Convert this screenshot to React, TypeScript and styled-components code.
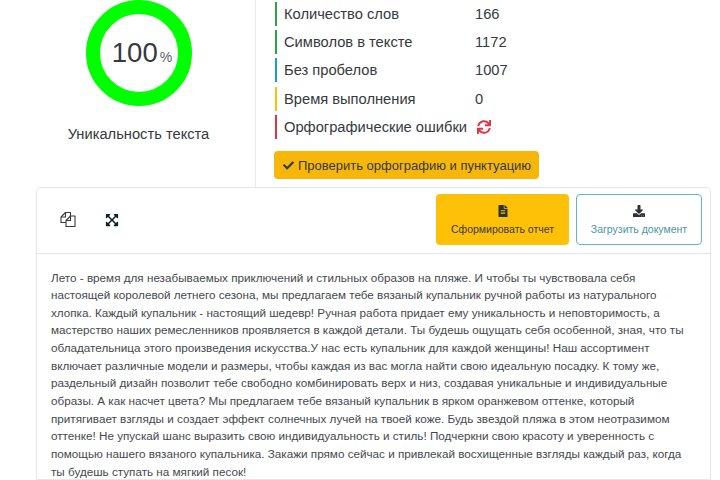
import React from "react";
import styled, { createGlobalStyle } from "styled-components";
import { FaCheck, FaSync, FaFileAlt, FaDownload, FaExpandArrowsAlt } from "react-icons/fa";

const Global = createGlobalStyle`
  html, body { margin: 0; padding: 0; background: #fff; overflow: hidden; }
  body { font-family: "Liberation Sans", Arial, sans-serif; color: #343a40; }
  * { box-sizing: border-box; }
`;

const Page = styled.div`
  width: 720px;
  height: 480px;
  overflow: hidden;
  display: flex;
  flex-direction: column;
`;

const Top = styled.section`
  display: flex;
  height: 187px;
  flex-shrink: 0;
`;

const ScoreColumn = styled.div`
  width: 256px;
  border-right: 1px solid #e6e8ea;
  padding-left: 22px;
  display: flex;
  flex-direction: column;
  align-items: center;
`;

const Ring = styled.div`
  width: 106px;
  height: 106px;
  border: 14px solid #00ff00;
  border-radius: 50%;
  display: flex;
  align-items: center;
  justify-content: center;
`;

const Percent = styled.span`
  font-size: 27.5px;
  line-height: 1;
  color: #343a40;
  margin: -1px 0 0 7px;
  white-space: nowrap;
  small { font-size: 14px; color: #5d6369; margin-left: 2px; }
`;

const ScoreLabel = styled.div`
  margin-top: 20px;
  font-size: 14.7px;
  line-height: 17px;
  color: #343a40;
  white-space: nowrap;
`;

const StatsColumn = styled.div`
  padding: 2px 0 0 18px;
  display: flex;
  flex-direction: column;
`;

const StatList = styled.div`
  display: flex;
  flex-direction: column;
  gap: 4.2px;
  margin-left: 1px;
`;

const Stat = styled.div<{ $color: string }>`
  display: flex;
  align-items: center;
  height: 24px;
  border-left: 2px solid ${(p) => p.$color};
  padding-left: 7px;
  font-size: 14.7px;
  color: #343a40;
`;

const StatName = styled.span`
  width: 191px;
  white-space: nowrap;
`;

const SpinIcon = styled(FaSync)`
  color: #dc3545;
  font-size: 14px;
  margin-left: 2px;
`;

const CheckButton = styled.button`
  margin-top: 12.5px;
  width: 265px;
  height: 28px;
  border: 0;
  border-radius: 4px;
  background: #f6b70a;
  color: #343a40;
  font: 13px "Liberation Sans", Arial, sans-serif;
  display: flex;
  align-items: center;
  gap: 4px;
  padding: 0 0 0 9px;
  white-space: nowrap;
`;

const Card = styled.section`
  margin-left: 36px;
  width: 675px;
  border: 1px solid #e4e6e8;
  border-radius: 5px 5px 0 0;
  flex: 1;
  min-height: 0;
  display: flex;
  flex-direction: column;
`;

const CardHeader = styled.div`
  height: 66px;
  flex-shrink: 0;
  border-bottom: 1px solid #e4e6e8;
  display: flex;
  align-items: flex-start;
  padding: 6px 8px 0 23px;
`;

const Tools = styled.div`
  display: flex;
  align-items: center;
  gap: 29px;
  height: 51px;
  flex: 1;
`;

const CopyGlyph = styled.svg`
  width: 16px;
  height: 17px;
  color: #343a40;
`;

const ExpandIcon = styled(FaExpandArrowsAlt)`
  font-size: 14px;
  color: #10202e;
`;

const ActionButton = styled.button<{ $outline?: boolean }>`
  width: ${(p) => (p.$outline ? "126px" : "133px")};
  height: 51px;
  margin-left: ${(p) => (p.$outline ? "7px" : "0")};
  border-radius: 4px;
  border: ${(p) => (p.$outline ? "1px solid #5fb6c4" : "0")};
  background: ${(p) => (p.$outline ? "#fff" : "#ffc107")};
  color: ${(p) => (p.$outline ? "#4a95a6" : "#343a40")};
  font: 10.5px "Liberation Sans", Arial, sans-serif;
  display: flex;
  flex-direction: column;
  align-items: center;
  justify-content: center;
  gap: 6px;
  padding: 0;
  white-space: nowrap;
  svg { font-size: 12px; color: #2a3338; }
`;

const Body = styled.p`
  margin: 0;
  padding: 14.5px 14px 0 14px;
  font-size: 11.7px;
  line-height: 17.65px;
  color: #44494e;
`;

export default function App() {
  return (
    <Page>
      <Global />
      <Top>
        <ScoreColumn>
          <Ring>
            <Percent>100<small>%</small></Percent>
          </Ring>
          <ScoreLabel>Уникальность текста</ScoreLabel>
        </ScoreColumn>
        <StatsColumn>
          <StatList>
            <Stat $color="#28a745"><StatName>Количество слов</StatName>166</Stat>
            <Stat $color="#28a745"><StatName>Символов в тексте</StatName>1172</Stat>
            <Stat $color="#17a2b8"><StatName>Без пробелов</StatName>1007</Stat>
            <Stat $color="#ffc107"><StatName>Время выполнения</StatName>0</Stat>
            <Stat $color="#dc3545"><StatName>Орфографические ошибки</StatName><SpinIcon /></Stat>
          </StatList>
          <CheckButton><FaCheck size={11} />Проверить орфографию и пунктуацию</CheckButton>
        </StatsColumn>
      </Top>
      <Card>
        <CardHeader>
          <Tools>
            <CopyGlyph viewBox="0 0 16 17" fill="none" stroke="currentColor" strokeWidth="1.1" strokeLinejoin="round">
              <path d="M10.5 5V1.5H5.5L1 6v5.5h5" />
              <path d="M5.5 1.5V6H1" />
              <path d="M15 5H10.5L6 9.500V15.500H15Z" />
              <path d="M10.500 5V9.500H6" />
            </CopyGlyph>
            <ExpandIcon />
          </Tools>
          <ActionButton><FaFileAlt />Сформировать отчет</ActionButton>
          <ActionButton $outline><FaDownload />Загрузить документ</ActionButton>
        </CardHeader>
        <Body>
          Лето - время для незабываемых приключений и стильных образов на пляже. И чтобы ты чувствовала себя настоящей королевой летнего сезона, мы предлагаем тебе вязаный купальник ручной работы из натурального хлопка. Каждый купальник - настоящий шедевр! Ручная работа придает ему уникальность и неповторимость, а мастерство наших ремесленников проявляется в каждой детали. Ты будешь ощущать себя особенной, зная, что ты обладательница этого произведения искусства.У нас есть купальник для каждой женщины! Наш ассортимент включает различные модели и размеры, чтобы каждая из вас могла найти свою идеальную посадку. К тому же, раздельный дизайн позволит тебе свободно комбинировать верх и низ, создавая уникальные и индивидуальные образы. А как насчет цвета? Мы предлагаем тебе вязаный купальник в ярком оранжевом оттенке, который притягивает взгляды и создает эффект солнечных лучей на твоей коже. Будь звездой пляжа в этом неотразимом оттенке! Не упускай шанс выразить свою индивидуальность и стиль! Подчеркни свою красоту и уверенность с помощью нашего вязаного купальника. Закажи прямо сейчас и привлекай восхищенные взгляды каждый раз, когда ты будешь ступать на мягкий песок!
        </Body>
      </Card>
    </Page>
  );
}
